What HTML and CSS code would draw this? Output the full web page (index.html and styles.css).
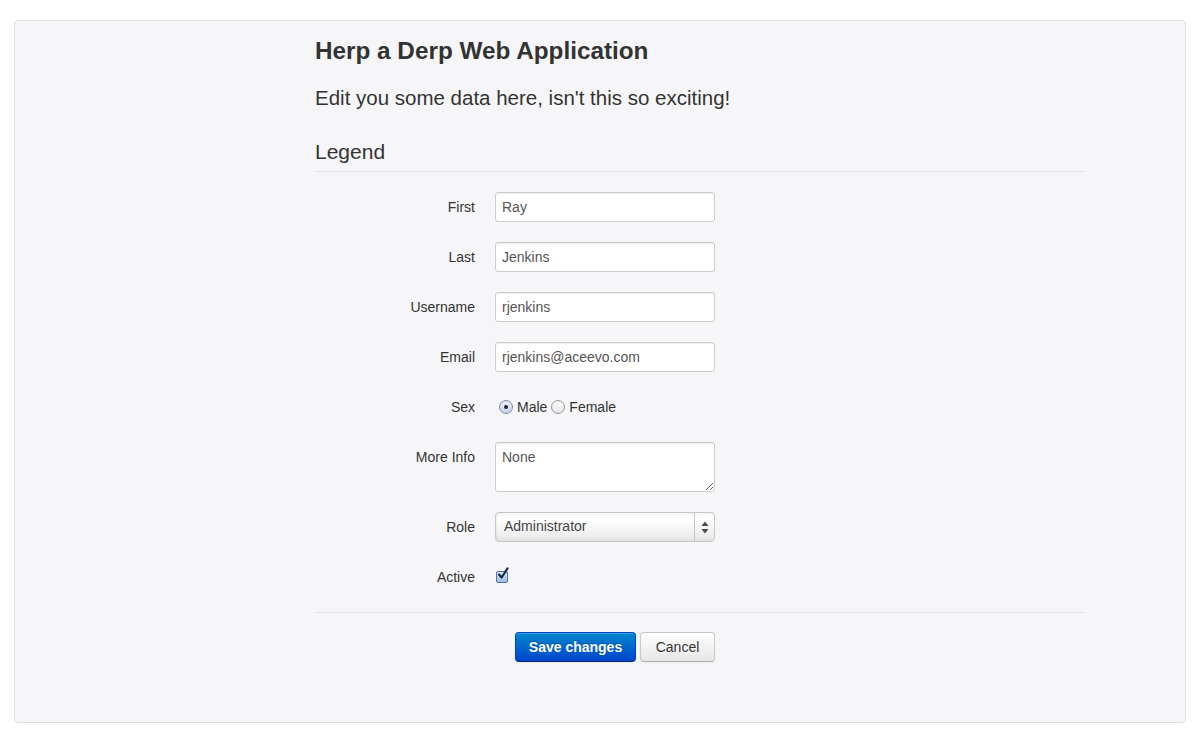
FILE: index.html
```html
<!DOCTYPE html>
<html>
<head>
<meta charset="utf-8">
<title>Herp a Derp Web Application</title>
<link rel="stylesheet" href="styles.css">
</head>
<body>
<div class="well">
  <div class="content">
    <h3 class="title">Herp a Derp Web Application</h3>
    <p class="lead">Edit you some data here, isn't this so exciting!</p>
    <form class="form-horizontal">
      <div class="legend">Legend</div>
      <div class="control-group">
        <label class="control-label">First</label>
        <div class="controls"><input class="text-input" type="text" value="Ray"></div>
      </div>
      <div class="control-group">
        <label class="control-label">Last</label>
        <div class="controls"><input class="text-input" type="text" value="Jenkins"></div>
      </div>
      <div class="control-group">
        <label class="control-label">Username</label>
        <div class="controls"><input class="text-input" type="text" value="rjenkins"></div>
      </div>
      <div class="control-group">
        <label class="control-label">Email</label>
        <div class="controls"><input class="text-input" type="text" value="rjenkins@aceevo.com"></div>
      </div>
      <div class="control-group">
        <label class="control-label">Sex</label>
        <div class="controls inline-controls">
          <span class="radio checked"></span><span class="opt">Male</span>
          <span class="radio"></span><span class="opt">Female</span>
        </div>
      </div>
      <div class="control-group">
        <label class="control-label">More Info</label>
        <div class="controls"><textarea class="text-area">None</textarea></div>
      </div>
      <div class="control-group">
        <label class="control-label">Role</label>
        <div class="controls">
          <div class="select">
            <span class="select-value">Administrator</span>
            <span class="select-arrows">
              <svg width="8" height="13" viewBox="0 0 8 13"><path d="M4 0.5 L7.5 5 L0.5 5 Z" fill="#4a4a4a"/><path d="M4 12.5 L7.5 8 L0.5 8 Z" fill="#4a4a4a"/></svg>
            </span>
          </div>
        </div>
      </div>
      <div class="control-group">
        <label class="control-label">Active</label>
        <div class="controls inline-controls">
          <span class="checkbox">
            <svg class="check" width="14" height="14" viewBox="0 0 14 14"><path d="M3 7.5 L5.6 10.5 L11.5 1.5" fill="none" stroke="#13264a" stroke-width="2.2" stroke-linecap="round" stroke-linejoin="round"/></svg>
          </span>
        </div>
      </div>
      <div class="form-actions">
        <button type="button" class="btn btn-primary">Save changes</button>
        <button type="button" class="btn btn-default">Cancel</button>
      </div>
    </form>
  </div>
</div>
</body>
</html>
```
FILE: styles.css
```css
html, body {
  margin: 0;
  padding: 0;
  background: #ffffff;
}
body {
  padding: 20px 15px 0 14px;
  font-family: "Liberation Sans", Arial, Helvetica, sans-serif;
  font-size: 14px;
  line-height: 20px;
  color: #333333;
}
.well {
  background: #f6f6f8;
  border: 1px solid #e1e1e4;
  border-radius: 4px;
  padding: 10px 0 19px 300px;
  height: 672px;
  box-sizing: content-box;
}
.content {
  width: 770px;
}
.title {
  margin: 0;
  font-size: 24.3px;
  line-height: 40px;
  font-weight: bold;
  color: #333;
}
.lead {
  margin: 12px 0 0 0;
  font-size: 20.5px;
  line-height: 30px;
  font-weight: normal;
  color: #333;
}
.form-horizontal {
  margin: 0;
}
.legend {
  margin-top: 18px;
  font-size: 21px;
  line-height: 42px;
  height: 40px;
  color: #333;
  border-bottom: 1px solid #e5e5e5;
  margin-bottom: 20px;
}
.control-group {
  display: grid;
  grid-template-columns: 160px 1fr;
  column-gap: 20px;
  margin-bottom: 20px;
}
.control-label {
  text-align: right;
  padding-top: 5px;
  line-height: 20px;
  font-size: 14px;
}
.controls {
  display: flex;
  align-items: flex-start;
}
.text-input, .text-area {
  width: 220px;
  height: 30px;
  box-sizing: border-box;
  padding: 4px 6px;
  border: 1px solid #cccccc;
  border-radius: 3px;
  background: #fff;
  box-shadow: inset 0 1px 1px rgba(0,0,0,0.075);
  font-family: "Liberation Sans", Arial, Helvetica, sans-serif;
  font-size: 14px;
  line-height: 20px;
  color: #555555;
  margin: 0;
  outline: none;
}
.text-area {
  height: 50px;
  resize: both;
  display: block;
}
.inline-controls {
  padding: 5px 0;
  height: 20px;
  box-sizing: content-box;
  align-items: center;
}
.radio {
  display: inline-block;
  width: 14px;
  height: 14px;
  border-radius: 50%;
  border: 1px solid #9a9a9a;
  box-sizing: border-box;
  background: linear-gradient(#ffffff, #e4e4e4);
  box-shadow: inset 0 1px 1px rgba(0,0,0,0.08);
  position: relative;
  margin: 0 4px 0 4px;
}
.radio + .opt + .radio {
  margin-left: 4px;
}
.radio.checked {
  border-color: #7d8ca6;
  background: linear-gradient(#eef3fb, #c2d3ee);
}
.radio.checked::after {
  content: "";
  position: absolute;
  width: 4px;
  height: 4px;
  border-radius: 50%;
  background: #222;
  left: 4px;
  top: 4px;
}
.opt {
  font-size: 14px;
  line-height: 20px;
  color: #333;
}
.checkbox {
  display: inline-block;
  width: 12px;
  height: 12px;
  margin-left: 1px;
  margin-top: 0px;
  box-sizing: border-box;
  border: 1px solid #56709a;
  border-radius: 2px;
  background: linear-gradient(#dbe8f8, #9dbde6);
  position: relative;
}
.check {
  position: absolute;
  left: -1px;
  top: -5px;
}
.select {
  width: 220px;
  height: 30px;
  box-sizing: border-box;
  border: 1px solid #c8c8c8;
  border-radius: 4px;
  background: linear-gradient(#f6f6f6 0%, #ffffff 20%, #eeeeee 80%, #e2e2e2 100%);
  box-shadow: inset 1px 0 2px rgba(0,0,0,0.06);
  display: flex;
  align-items: stretch;
}
.select-value {
  flex: 1;
  padding-left: 8px;
  line-height: 27px;
  font-size: 14px;
  color: #444;
}
.select-arrows {
  width: 19px;
  border-left: 1px solid #c6c6c6;
  display: flex;
  align-items: center;
  justify-content: center;
}
.form-actions {
  border-top: 1px solid #e5e5e5;
  padding: 19px 20px 20px 200px;
  margin-bottom: 20px;
  display: flex;
  gap: 4px;
}
.btn {
  height: 30px;
  box-sizing: border-box;
  font-family: "Liberation Sans", Arial, Helvetica, sans-serif;
  font-size: 14px;
  line-height: 20px;
  color: #333;
  border: 1px solid #c8c8c8;
  border-bottom-color: #b3b3b3;
  border-radius: 4px;
  background: linear-gradient(#ffffff, #e6e6e6);
  box-shadow: inset 0 1px 0 rgba(255,255,255,0.2), 0 1px 2px rgba(0,0,0,0.05);
  text-shadow: 0 1px 1px rgba(255,255,255,0.75);
  cursor: pointer;
  margin: 0;
}
.btn-default {
  width: 75px;
  padding: 4px 0;
  text-align: center;
}
.btn-primary {
  width: 121px;
  padding: 4px 0;
  text-align: center;
  color: #fff;
  font-weight: bold;
  border-color: #0044cc #0044cc #002a80;
  background: linear-gradient(#0088cc, #0044cc);
  text-shadow: 0 -1px 0 rgba(0,0,0,0.25);
}
```
